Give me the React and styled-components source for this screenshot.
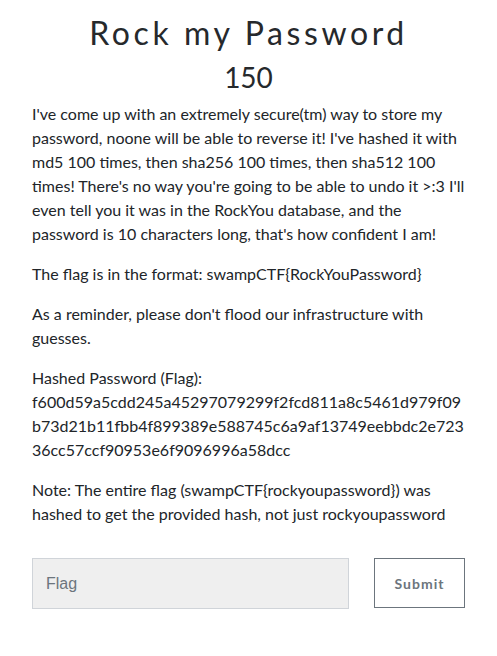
import React from "react";
import styled, { createGlobalStyle } from "styled-components";

const GlobalStyle = createGlobalStyle`
  body {
    margin: 0;
    background: #fff;
    font-family: Lato, "Liberation Sans", sans-serif;
    color: #212529;
  }
`;

const Wrapper = styled.div`
  padding: 11px 32px 0 32px;
  display: flex;
  flex-direction: column;
`;

const Title = styled.h1`
  margin: 0;
  text-align: center;
  font-family: Lato, sans-serif;
  font-weight: 400;
  font-size: 32px;
  letter-spacing: 3.6px;
  line-height: 44px;
  color: #26292c;
`;

const Value = styled.h2`
  margin: 1px 0 4px 0;
  text-align: center;
  font-weight: 400;
  font-size: 28px;
  line-height: 42px;
  color: #26292c;
`;

const Text = styled.p`
  margin: 0 0 16px 0;
  font-size: 16px;
  line-height: 24px;
  word-break: ${(p) => (p.$hash ? "break-all" : "normal")};
`;

const Form = styled.form`
  display: flex;
  align-items: flex-start;
  gap: 25px;
  margin-top: 16px;
`;

const FlagInput = styled.input`
  flex: 1;
  height: 51px;
  box-sizing: border-box;
  padding: 0 13px;
  background: #efefef;
  border: 1px solid #d0d4d9;
  font-family: "Liberation Sans", Arial, sans-serif;
  font-size: 16px;
  color: #212529;
  outline: none;
  &::placeholder {
    color: #6c757d;
  }
`;

const SubmitButton = styled.button`
  width: 91px;
  height: 50px;
  background: #fff;
  border: 1px solid #6c757d;
  font-family: Lato, sans-serif;
  font-weight: 700;
  font-size: 14px;
  letter-spacing: 1px;
  color: #6c757d;
  cursor: pointer;
`;

export default function App() {
  return (
    <>
      <GlobalStyle />
      <Wrapper>
        <Title>Rock my Password</Title>
        <Value>150</Value>
        <Text>
          I've come up with an extremely secure(tm) way to store my password, noone will be able to reverse it! I've hashed it with md5 100 times, then sha256 100 times, then sha512 100 times! There's no way you're going to be able to undo it &gt;:3 I'll even tell you it was in the RockYou database, and the password is 10 characters long, that's how confident I am!
        </Text>
        <Text>The flag is in the format: swampCTF&#123;RockYouPassword&#125;</Text>
        <Text>As a reminder, please don't flood our infrastructure with guesses.</Text>
        <Text $hash>
          Hashed Password (Flag):
          <br />
          f600d59a5cdd245a45297079299f2fcd811a8c5461d979f09b73d21b11fbb4f899389e588745c6a9af13749eebbdc2e72336cc57ccf90953e6f9096996a58dcc
        </Text>
        <Text>
          Note: The entire flag (swampCTF&#123;rockyoupassword&#125;) was hashed to get the provided hash, not just rockyoupassword
        </Text>
        <Form onSubmit={(e) => e.preventDefault()}>
          <FlagInput placeholder="Flag" />
          <SubmitButton type="submit">Submit</SubmitButton>
        </Form>
      </Wrapper>
    </>
  );
}
